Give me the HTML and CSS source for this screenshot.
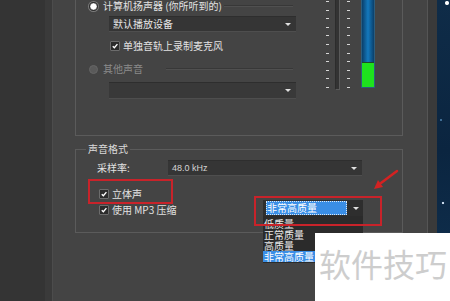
FILE: index.html
```html
<!DOCTYPE html>
<html lang="zh-CN">
<head>
    <meta charset="UTF-8">
    <title>录音设置</title>
    <link rel="stylesheet" href="styles.css">
</head>
<body>
    <div class="screen">
        <div class="sidebar"></div>
        <div class="strip"></div>
        <div class="panel">
            <div class="group group-source">
                <div class="source-options">
                    <div class="option-row">
                        <span class="radio checked"></span>
                        <span class="option-label">计算机扬声器 (你所听到的)</span>
                        <span class="rule"></span>
                    </div>
                    <div class="select select-device">
                        <span class="select-text">默认播放设备</span>
                        <span class="arrow"></span>
                    </div>
                    <div class="check-row check-mic">
                        <span class="checkbox"><svg viewBox="0 0 10 10"><path d="M2.2 5.2 L4.2 7.2 L8 2.6"/></svg></span>
                        <span>单独音轨上录制麦克风</span>
                    </div>
                    <div class="option-row disabled">
                        <span class="radio"></span>
                        <span class="option-label">其他声音</span>
                        <span class="rule rule-other"></span>
                    </div>
                    <div class="select select-other">
                        <span class="select-text"></span>
                        <span class="arrow"></span>
                    </div>
                </div>
                <div class="levels">
                    <div class="ticks"></div>
                    <div class="track"></div>
                    <div class="ticks ticks-right"></div>
                    <div class="meter">
                        <div class="meter-blue"></div>
                        <div class="meter-green"></div>
                    </div>
                </div>
            </div>

            <fieldset class="group group-format">
                <legend>声音格式</legend>
                <div class="rate-row">
                    <span class="rate-label">采样率:</span>
                    <div class="select select-rate">
                        <span class="select-text latin">48.0 kHz</span>
                        <span class="arrow"></span>
                    </div>
                </div>
                <div class="check-row check-stereo">
                    <span class="checkbox"><svg viewBox="0 0 10 10"><path d="M2.2 5.2 L4.2 7.2 L8 2.6"/></svg></span>
                    <span>立体声</span>
                </div>
                <div class="mp3-row">
                    <div class="check-row">
                        <span class="checkbox"><svg viewBox="0 0 10 10"><path d="M2.2 5.2 L4.2 7.2 L8 2.6"/></svg></span>
                        <span>使用 MP3 压缩</span>
                    </div>
                    <div class="select select-quality">
                        <span class="quality-value">非常高质量</span>
                        <span class="arrow"></span>
                        <ul class="quality-list">
                            <li>低质量</li>
                            <li>正常质量</li>
                            <li>高质量</li>
                            <li class="selected">非常高质量</li>
                        </ul>
                    </div>
                </div>
            </fieldset>
        </div>
        <div class="frame"></div>
        <div class="desktop"></div>
    </div>

    <div class="mark mark-stereo"></div>
    <div class="mark mark-quality"></div>
    <svg class="pointer" viewBox="0 0 450 301">
        <path class="pointer-line" d="M397 171 L381 183"/>
        <path class="pointer-head" d="M374 189 L383 187 L378 180 Z"/>
    </svg>
    <div class="watermark">软件技巧</div>
</body>
</html>
```

FILE: styles.css
```css
* {
    margin: 0;
    padding: 0;
    box-sizing: border-box;
}
body {
    width: 450px;
    height: 301px;
    overflow: hidden;
    position: relative;
    background: #343434;
    color: #e2e2e2;
    font-family: 'Noto Sans CJK SC', 'Noto Sans', sans-serif;
    font-size: 10px;
    line-height: 12px;
}
.screen {
    display: flex;
    height: 301px;
}
.sidebar {
    width: 45px;
    background: #343434;
}
.strip {
    width: 8px;
    background: #3a3a3a;
    border-right: 1px solid #4c4c4c;
}
.panel {
    width: 374px;
    background: #444444;
    overflow: hidden;
}
.frame {
    width: 10px;
    background: #3a3a3a;
    border-left: 1px solid #555555;
}
.desktop {
    flex: 1;
    background:
        radial-gradient(circle at 10px 3px, #ffffff 0 1.5px, transparent 2.5px),
        radial-gradient(circle at 6px 203px, #c8d8ea 0 1px, transparent 1.6px),
        radial-gradient(circle at 4px 120px, #3f6d94 0 1px, transparent 1.5px),
        linear-gradient(180deg, #0f2c48, #0b2540 50%, #103150);
}

/* group boxes */
.group {
    width: 328px;
    margin-left: 22px;
    border: 1px solid #5b5b5b;
}
.group-source {
    display: flex;
    margin-top: -12px;
}
.source-options {
    width: 220px;
    padding: 11px 0 36px 13px;
}
.option-row {
    display: flex;
    align-items: center;
    height: 12px;
}
.option-row.disabled {
    margin-top: 12px;
    color: #8a8a8a;
}
.radio {
    width: 9px;
    height: 9px;
    border-radius: 50%;
    background: #5a5a5a;
    border: 1px solid #666666;
    margin-right: 5px;
}
.radio.checked {
    background: radial-gradient(circle, #ffffff 0 2.5px, #d8d8d8 3px);
    border-color: #2a2a2a;
    box-shadow: 0 0 0 1px #7a7a7a;
}
.rule {
    flex: 1;
    height: 2px;
    margin: 0 3px 0 2px;
    border-top: 1px solid #383838;
    border-bottom: 1px solid #505050;
}
.rule-other {
    margin-left: 23px;
}

.select {
    display: flex;
    align-items: center;
    justify-content: space-between;
    background: #353535;
    border-top: 1px solid #2e2e2e;
    border-bottom: 1px solid #4e4e4e;
    padding: 0 5px 0 4px;
    color: #e6e6e6;
}
.select-device {
    height: 16px;
    margin: 4px 0 0 20px;
    width: 187px;
}
.select-other {
    height: 17px;
    margin: 7px 0 0 20px;
    width: 187px;
    background: #393939;
}
.arrow {
    width: 0;
    height: 0;
    border-left: 3px solid transparent;
    border-right: 3px solid transparent;
    border-top: 3px solid #e0e0e0;
}

.check-row {
    display: flex;
    align-items: center;
    gap: 3px;
    height: 12px;
}
.check-mic {
    height: 10px;
    margin: 9px 0 0 21px;
}
.checkbox {
    width: 10px;
    height: 10px;
    background: #2b2b2b;
    border: 1px solid #6c6c6c;
    border-radius: 1px;
}
.checkbox svg {
    display: block;
    width: 8px;
    height: 8px;
}
.checkbox path {
    fill: none;
    stroke: #ffffff;
    stroke-width: 1.7;
}

/* level meters */
.levels {
    display: flex;
    align-items: flex-start;
    margin-left: 30px;
}
.ticks {
    width: 3px;
    height: 88px;
    margin-top: 12px;
    background: repeating-linear-gradient(to bottom, #d6d6d6 0 1px, transparent 1px 8.6px);
}
.ticks-right {
    margin-left: 7px;
}
.track {
    width: 5px;
    height: 101px;
    margin-left: 6px;
    background: #333333;
    border-left: 1px solid #2c2c2c;
    border-right: 1px solid #5a5a5a;
    border-bottom: 1px solid #5a5a5a;
}
.meter {
    display: flex;
    flex-direction: column;
    width: 14px;
    height: 99px;
    margin-left: 11px;
    border: 1px solid #2d5d7d;
}
.meter-blue {
    flex: 1;
    background: linear-gradient(90deg, #0a3f6a, #1479bd 50%, #0a3f6a);
}
.meter-green {
    height: 25px;
    background: #1ee21e;
    border-top: 1px solid #1c4a28;
}

/* sound format */
.group-format {
    margin-top: 7px;
    padding: 5px 0 16px 0;
    min-width: 0;
}
.group-format legend {
    margin-left: 10px;
    padding: 0 2px;
    color: #dadada;
    line-height: 12px;
}
.rate-row {
    display: flex;
    height: 16px;
    margin-left: 21px;
}
.rate-label {
    width: 71px;
    line-height: 16px;
}
.select-rate {
    width: 194px;
    height: 16px;
    padding-right: 5px;
}
.latin {
    font-family: 'Liberation Sans', sans-serif;
    font-size: 9px;
    color: #d4d4d4;
}
.check-stereo {
    margin: 12px 0 0 23px;
}
.mp3-row {
    display: flex;
    align-items: flex-end;
    height: 16px;
    margin-left: 23px;
}
.select-quality {
    position: relative;
    width: 100px;
    height: 16px;
    margin: 0 39px 0 auto;
    padding: 0 4px 0 3px;
    background: #2e2e2e;
    border: none;
}
.quality-value {
    width: 81px;
    height: 14px;
    line-height: 12px;
    background: #3a8ee6;
    border: 1px dotted #dce8f5;
    color: #ffffff;
}
.quality-list {
    position: absolute;
    top: 16px;
    left: 0;
    width: 100px;
    height: 47px;
    padding-top: 2px;
    overflow: hidden;
    list-style: none;
    background: #2b2b2b;
    color: #e8e8e8;
}
.quality-list li {
    height: 11px;
    line-height: 11px;
    padding-left: 1px;
}
.quality-list li.selected {
    background: #3a8ee6;
    color: #ffffff;
}

/* screenshot annotations */
.mark {
    position: absolute;
    border: 2px solid #c8232a;
}
.mark-stereo {
    left: 88px;
    top: 179px;
    width: 85px;
    height: 25px;
}
.mark-quality {
    left: 254px;
    top: 196px;
    width: 128px;
    height: 30px;
}
.pointer {
    position: absolute;
    left: 0;
    top: 0;
    width: 450px;
    height: 301px;
}
.pointer-line {
    stroke: #d42222;
    stroke-width: 2.5;
    stroke-linecap: round;
}
.pointer-head {
    fill: #d42222;
}
.watermark {
    position: absolute;
    left: 315px;
    top: 233px;
    right: 0;
    bottom: 0;
    padding: 14px 0 0 4px;
    background: #ffffff;
    color: #cdcdcd;
    font-size: 32px;
    line-height: 32px;
    white-space: nowrap;
}
```
